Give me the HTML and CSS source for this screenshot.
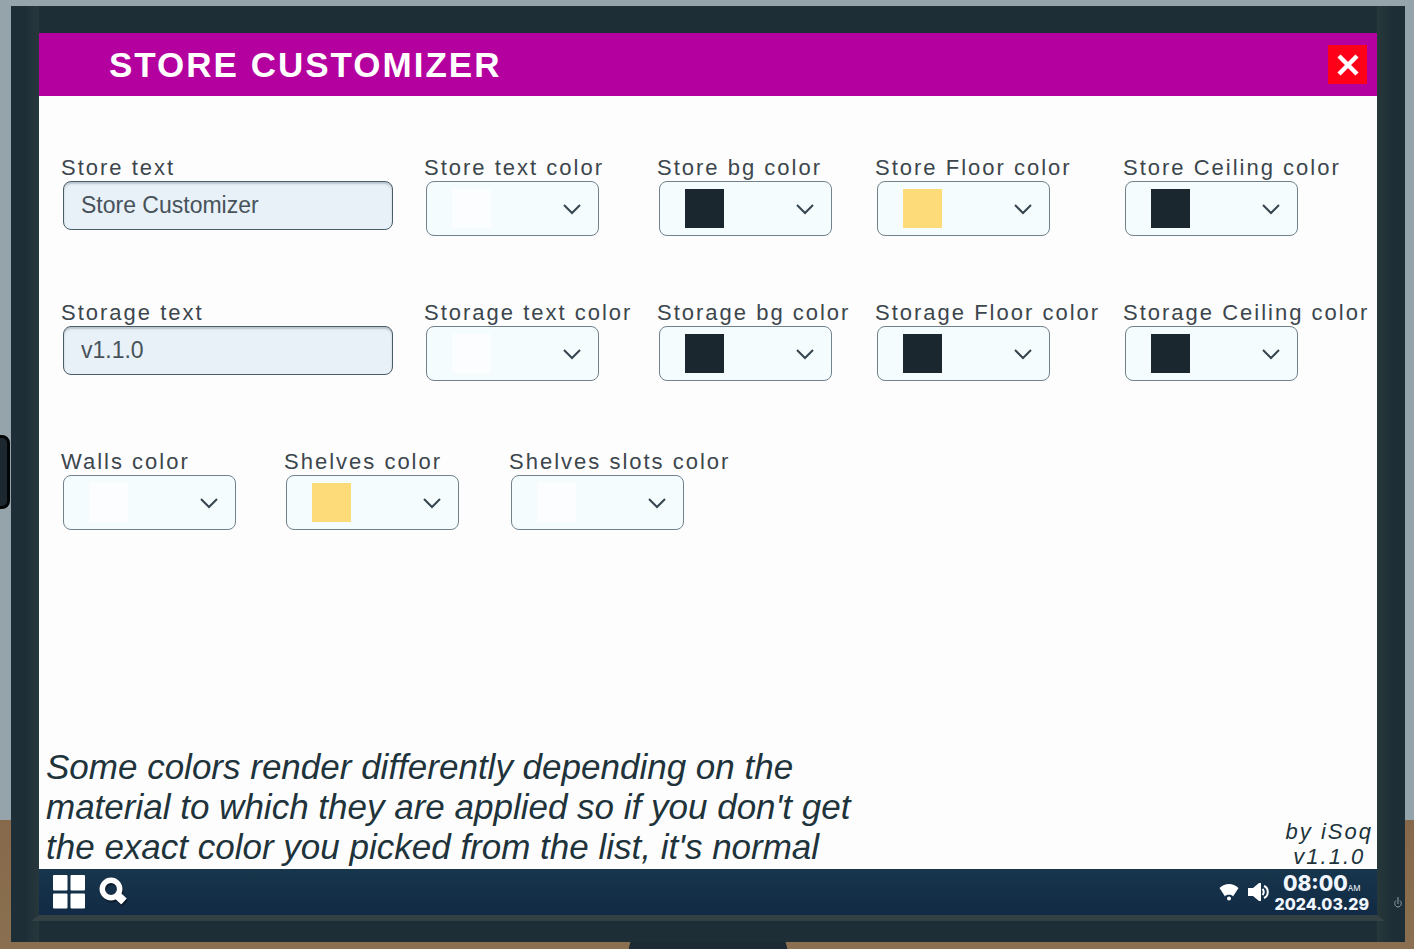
FILE: index.html
```
<!DOCTYPE html>
<html lang="en">
<head>
  <meta charset="UTF-8">
  <meta name="viewport" content="width=device-width, initial-scale=1.0">
  <title>Store Customizer</title>
  <link rel="stylesheet" href="styles.css">
</head>
<body>

<div class="side-object"></div>

<div class="monitor">
  <div class="screen">
    <header class="title-bar">
      <h1>STORE CUSTOMIZER</h1>
      <button class="close" type="button" aria-label="Close">
        <svg width="22" height="22" viewBox="0 0 22 22"><path d="M2 2L20 20M20 2L2 20" stroke="#fff" stroke-width="4.500"/></svg>
      </button>
    </header>

    <main class="content">
      <form class="settings">
        <div class="row">
          <div class="field">
            <label for="storeText">Store text</label>
            <input type="text" id="storeText" value="Store Customizer">
          </div>
          <div class="field">
            <label for="storeTextColor">Store text color</label>
            <div class="picker">
              <select id="storeTextColor" class="white"><option aria-label="White"></option></select>
              <svg class="chevron" viewBox="0 0 20 12"><path d="M2 2l8 8 8-8"/></svg>
            </div>
          </div>
          <div class="field">
            <label for="storeBgColor">Store bg color</label>
            <div class="picker">
              <select id="storeBgColor" class="dark"><option aria-label="Dark"></option></select>
              <svg class="chevron" viewBox="0 0 20 12"><path d="M2 2l8 8 8-8"/></svg>
            </div>
          </div>
          <div class="field">
            <label for="storeFloorColor">Store Floor color</label>
            <div class="picker">
              <select id="storeFloorColor" class="yellow"><option aria-label="Yellow"></option></select>
              <svg class="chevron" viewBox="0 0 20 12"><path d="M2 2l8 8 8-8"/></svg>
            </div>
          </div>
          <div class="field">
            <label for="storeCeilingColor">Store Ceiling color</label>
            <div class="picker">
              <select id="storeCeilingColor" class="dark"><option aria-label="Dark"></option></select>
              <svg class="chevron" viewBox="0 0 20 12"><path d="M2 2l8 8 8-8"/></svg>
            </div>
          </div>
        </div>

        <div class="row">
          <div class="field">
            <label for="storageText">Storage text</label>
            <input type="text" id="storageText" value="v1.1.0">
          </div>
          <div class="field">
            <label for="storageTextColor">Storage text color</label>
            <div class="picker">
              <select id="storageTextColor" class="white"><option aria-label="White"></option></select>
              <svg class="chevron" viewBox="0 0 20 12"><path d="M2 2l8 8 8-8"/></svg>
            </div>
          </div>
          <div class="field">
            <label for="storageBgColor">Storage bg color</label>
            <div class="picker">
              <select id="storageBgColor" class="dark"><option aria-label="Dark"></option></select>
              <svg class="chevron" viewBox="0 0 20 12"><path d="M2 2l8 8 8-8"/></svg>
            </div>
          </div>
          <div class="field">
            <label for="storageFloorColor">Storage Floor color</label>
            <div class="picker">
              <select id="storageFloorColor" class="dark"><option aria-label="Dark"></option></select>
              <svg class="chevron" viewBox="0 0 20 12"><path d="M2 2l8 8 8-8"/></svg>
            </div>
          </div>
          <div class="field">
            <label for="storageCeilingColor">Storage Ceiling color</label>
            <div class="picker">
              <select id="storageCeilingColor" class="dark"><option aria-label="Dark"></option></select>
              <svg class="chevron" viewBox="0 0 20 12"><path d="M2 2l8 8 8-8"/></svg>
            </div>
          </div>
        </div>

        <div class="row row-walls">
          <div class="field">
            <label for="wallsColor">Walls color</label>
            <div class="picker">
              <select id="wallsColor" class="white"><option aria-label="White"></option></select>
              <svg class="chevron" viewBox="0 0 20 12"><path d="M2 2l8 8 8-8"/></svg>
            </div>
          </div>
          <div class="field">
            <label for="shelvesColor">Shelves color</label>
            <div class="picker">
              <select id="shelvesColor" class="yellow"><option aria-label="Yellow"></option></select>
              <svg class="chevron" viewBox="0 0 20 12"><path d="M2 2l8 8 8-8"/></svg>
            </div>
          </div>
          <div class="field">
            <label for="slotsColor">Shelves slots color</label>
            <div class="picker">
              <select id="slotsColor" class="white"><option aria-label="White"></option></select>
              <svg class="chevron" viewBox="0 0 20 12"><path d="M2 2l8 8 8-8"/></svg>
            </div>
          </div>
        </div>
      </form>

      <div class="notes">
        <p class="hint">Some colors render differently depending on the material to which they are applied so if you don't get the exact color you picked from the list, it's normal</p>
        <p class="credit">by iSoq<br>v1.1.0</p>
      </div>
    </main>

    <footer class="taskbar">
      <button type="button" aria-label="Start">
        <svg width="32" height="34" viewBox="0 0 32 34" fill="#fff"><rect width="14.500" height="15.500" rx="1"/><rect x="17.500" width="14.500" height="15.500" rx="1"/><rect y="18.500" width="14.500" height="15" rx="1"/><rect x="17.500" y="18.500" width="14.500" height="15" rx="1"/></svg>
      </button>
      <button type="button" aria-label="Search">
        <svg width="30" height="32" viewBox="0 0 30 32" fill="none">
          <g stroke="#0a1a2a" transform="translate(1 2)"><circle cx="12" cy="13" r="8.700" stroke-width="5.500"/><path d="M17.500 18.500l7.500 7" stroke-width="8"/></g>
          <g stroke="#fff"><circle cx="12" cy="13" r="8.700" stroke-width="5.500"/><path d="M17.500 18.500l7.500 7" stroke-width="8"/></g>
        </svg>
      </button>
      <div class="tray">
        <svg width="20" height="18" viewBox="0 0 20 18" fill="#fff"><path d="M.5 5C6-.5 14-.5 19.500 5L14 13.500C13.500 11 6.500 11 6 13.500z"/><circle cx="10" cy="15.500" r="2"/></svg>
        <svg width="21" height="18" viewBox="0 0 21 18"><path d="M0 5h5l6-5h2v18h-2l-6-5H0z" fill="#fff"/><path d="M14.500 6q2.500 3 0 6M16 3c5 2 5 10 0 12" fill="none" stroke="#fff" stroke-width="2"/></svg>
        <div class="clock">
          <div class="time">08:00<small>AM</small></div>
          <div class="date">2024.03.29</div>
        </div>
      </div>
    </footer>
  </div>
  <div class="bevel"></div>
  <svg class="power" width="8" height="12" viewBox="0 0 8 12" fill="none" stroke="#8fa0a6"><path d="M4 0v7M2 3.500C-.5 6 1 10 4 10s4.500-4 2-6.500"/></svg>
</div>
<div class="stand"></div>

</body>
</html>
```
FILE: styles.css
```
* {
  box-sizing: border-box;
}
body {
  margin: 0;
  min-height: 100vh;
  padding: 6px 9px 0 11px;
  display: flex;
  flex-direction: column;
  align-items: center;
  font-family: "Liberation Sans", Arial, sans-serif;
  background: linear-gradient(#95a3ab 0, #95a3ab 820px, #86694a 820px, #8a7050 100%);
}
h1, p {
  margin: 0;
}
button {
  display: flex;
  align-items: center;
  justify-content: center;
  padding: 0;
  border: 0;
  background: none;
  cursor: pointer;
}

/* monitor */
.side-object {
  position: absolute;
  left: -12px;
  top: 435px;
  width: 22px;
  height: 74px;
  border: 3px solid #020507;
  border-radius: 8px;
  background: #1c272f;
}
.monitor {
  position: relative;
  flex: 1;
  width: 100%;
  display: flex;
  flex-direction: column;
  padding: 27px 28px 21px;
  background: linear-gradient(90deg, #1e2e37 0, #1e2e37 14px, #27383c 28px, #1e2e37 28px, #1e2e37 calc(100% - 28px), #27383a calc(100% - 28px), #1e2e37 calc(100% - 12px));
}
.screen {
  flex: 1;
  display: flex;
  flex-direction: column;
  background: #fdfdfd;
}
.bevel {
  height: 6px;
  margin: 0 -8px;
  background: #334144;
  clip-path: polygon(8px 0, calc(100% - 8px) 0, 100% 100%, 0 100%);
}
.power {
  position: absolute;
  right: 3px;
  bottom: 33px;
}
.stand {
  width: 159px;
  height: 7px;
  background: #1b2a35;
  clip-path: polygon(2px 0, calc(100% - 2px) 0, 100% 100%, 0 100%);
}

/* title */
.title-bar {
  height: 63px;
  padding: 0 10px 0 70px;
  display: flex;
  align-items: center;
  justify-content: space-between;
  background: #b4009e;
}
.title-bar h1 {
  font-size: 35px;
  letter-spacing: 2px;
  color: #fff;
}
.close {
  width: 39px;
  height: 39px;
  background: #ff0019;
}

/* settings */
.content {
  flex: 1;
  display: flex;
  flex-direction: column;
  justify-content: space-between;
  padding-top: 59px;
}
.settings {
  padding-left: 22px;
}
.row {
  display: grid;
  grid-template-columns: 363fr 233fr 218fr 248fr 254fr;
  margin-bottom: 64px;
}
.row-walls {
  grid-template-columns: 223fr 225fr 868fr;
  margin-top: 68px;
  margin-bottom: 0;
}
.field {
  min-width: 0;
  padding-right: 31px;
}
.field label {
  display: block;
  font-size: 22px;
  line-height: 26px;
  letter-spacing: 2px;
  white-space: nowrap;
  color: #3c464d;
}
.field input {
  display: block;
  width: calc(100% - 2px);
  height: 49px;
  margin-left: 2px;
  padding: 0 17px;
  border: 1px solid #4a5d69;
  border-radius: 8px;
  background: #e8f0f8;
  box-shadow: inset 0 2px 2px #b9c3cb;
  font-family: inherit;
  font-size: 23px;
  color: #47535a;
}
.picker {
  position: relative;
  width: 173px;
  margin-left: 2px;
}
.picker select {
  display: block;
  appearance: none;
  width: 100%;
  height: 55px;
  border: 1px solid #71828d;
  border-radius: 8px;
  background: linear-gradient(var(--swatch), var(--swatch)) 25px 7px / 39px 39px no-repeat #f5fcfe;
}
.white {
  --swatch: #fbfdfe;
}
.dark {
  --swatch: #1a272f;
}
.yellow {
  --swatch: #fddb78;
}
.chevron {
  position: absolute;
  right: 17px;
  top: 22px;
  width: 20px;
  height: 12px;
  fill: none;
  stroke: #35444c;
  stroke-width: 2;
  pointer-events: none;
}

/* notes */
.notes {
  display: flex;
  justify-content: space-between;
  align-items: flex-end;
  padding: 0 4px 0 7px;
  font-style: italic;
  color: #20333b;
}
.hint {
  max-width: 840px;
  padding-bottom: 2px;
  font-size: 35px;
  line-height: 40px;
}
.credit {
  font-size: 22px;
  line-height: 25px;
  letter-spacing: 2px;
  text-align: center;
}

/* taskbar */
.taskbar {
  height: 46px;
  padding: 0 8px 0 14px;
  display: flex;
  align-items: center;
  gap: 14px;
  background: linear-gradient(#17364c, #122a45);
}
.tray {
  margin-left: auto;
  display: flex;
  align-items: center;
  gap: 9px;
}
.clock {
  margin-left: -4px;
  padding-top: 3px;
  font-family: Inter, "Liberation Sans", sans-serif;
  font-weight: 800;
  text-align: center;
  color: #f2f7ff;
}
.time {
  font-size: 21px;
  line-height: 21px;
}
.time small {
  font-size: 8px;
  line-height: 8px;
  font-weight: 400;
}
.date {
  font-size: 16px;
  line-height: 20px;
}
```
